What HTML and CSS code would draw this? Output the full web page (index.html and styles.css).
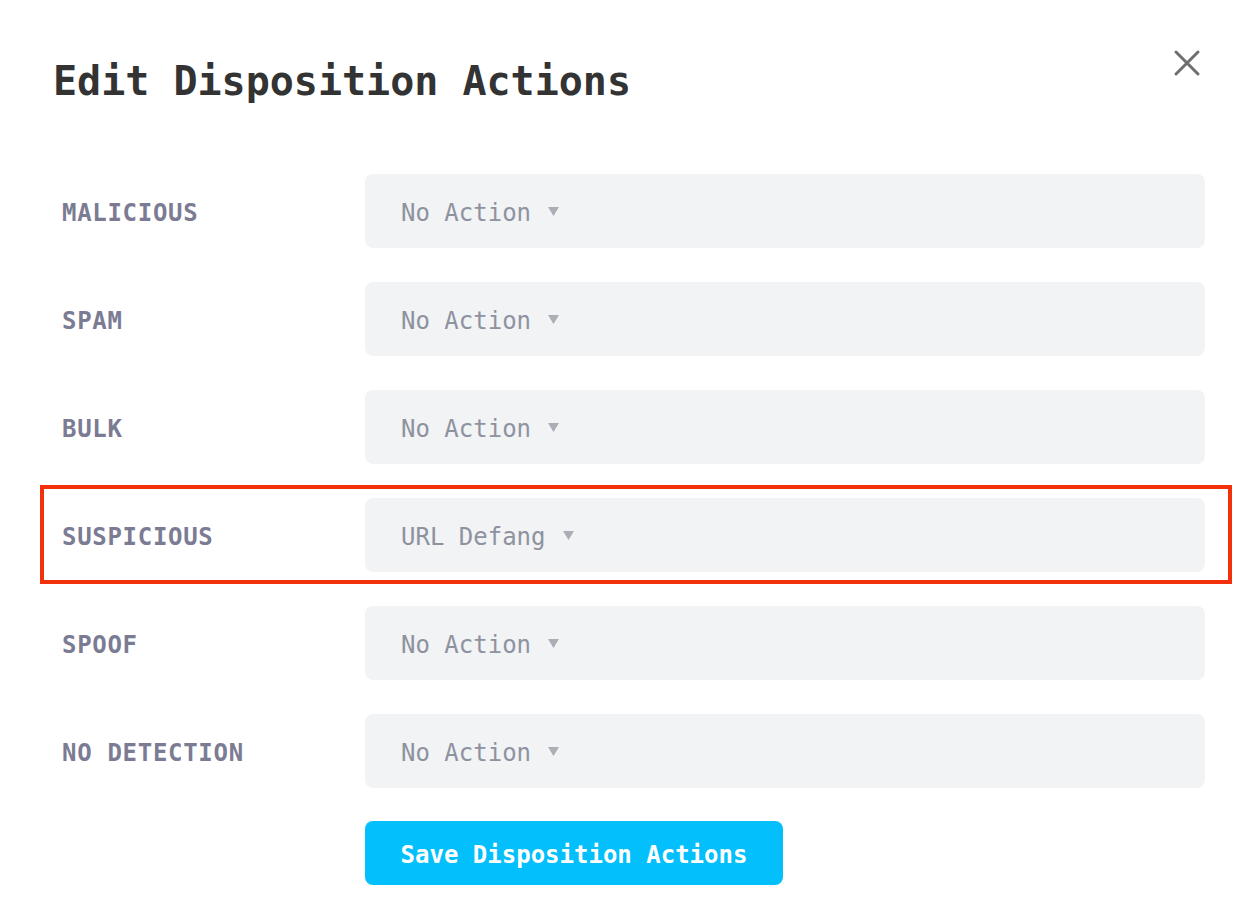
FILE: index.html
```html
<!DOCTYPE html>
<html lang="en">
<head>
<meta charset="utf-8">
<title>Edit Disposition Actions</title>
<link rel="stylesheet" href="styles.css">
</head>
<body>
<div class="modal">
  <button class="close" aria-label="Close">
    <svg width="28" height="28" viewBox="0 0 28 28"><path d="M3 3 L25 25 M25 3 L3 25" stroke="#6e6e6e" stroke-width="3" stroke-linecap="round" fill="none"/></svg>
  </button>
  <h1 class="title">Edit Disposition Actions</h1>
  <div class="rows">
    <div class="row"><div class="label">MALICIOUS</div><div class="select"><span>No Action</span><svg class="caret" width="11" height="9" viewBox="0 0 11 9"><path d="M0 0 H11 L5.5 9 Z" fill="#abaeb5"/></svg></div></div>
    <div class="row"><div class="label">SPAM</div><div class="select"><span>No Action</span><svg class="caret" width="11" height="9" viewBox="0 0 11 9"><path d="M0 0 H11 L5.5 9 Z" fill="#abaeb5"/></svg></div></div>
    <div class="row"><div class="label">BULK</div><div class="select"><span>No Action</span><svg class="caret" width="11" height="9" viewBox="0 0 11 9"><path d="M0 0 H11 L5.5 9 Z" fill="#abaeb5"/></svg></div></div>
    <div class="row highlighted"><div class="label">SUSPICIOUS</div><div class="select"><span>URL Defang</span><svg class="caret" width="11" height="9" viewBox="0 0 11 9"><path d="M0 0 H11 L5.5 9 Z" fill="#abaeb5"/></svg></div><div class="highlight"></div></div>
    <div class="row"><div class="label">SPOOF</div><div class="select"><span>No Action</span><svg class="caret" width="11" height="9" viewBox="0 0 11 9"><path d="M0 0 H11 L5.5 9 Z" fill="#abaeb5"/></svg></div></div>
    <div class="row"><div class="label">NO DETECTION</div><div class="select"><span>No Action</span><svg class="caret" width="11" height="9" viewBox="0 0 11 9"><path d="M0 0 H11 L5.5 9 Z" fill="#abaeb5"/></svg></div></div>
    <div class="row"><div class="label"></div><button class="save">Save Disposition Actions</button></div>
  </div>
</div>
</body>
</html>
```
FILE: styles.css
```css
* { box-sizing: border-box; }
html, body { margin: 0; padding: 0; background: #fff; }
body { font-family: "DejaVu Sans Mono", "Liberation Mono", monospace; }
.modal {
  position: relative;
  width: 1259px;
  min-height: 915px;
  padding: 57px 54px 0 53px;
}
.close {
  position: absolute;
  left: 1173px;
  top: 49px;
  width: 28px;
  height: 28px;
  padding: 0;
  border: 0;
  background: none;
}
.close svg { display: block; }
.title {
  margin: 0;
  font-size: 40px;
  line-height: 48px;
  font-weight: bold;
  color: #333333;
}
.rows {
  margin-top: 69px;
  padding-left: 9px;
  display: flex;
  flex-direction: column;
  gap: 34px;
}
.row {
  position: relative;
  display: flex;
  align-items: center;
}
.row:last-child { margin-top: -1px; }
.label {
  width: 303px;
  flex: none;
  padding-top: 4px;
  font-size: 24px;
  letter-spacing: 0.7px;
  font-weight: bold;
  color: #7b7c93;
}
.select {
  flex: 1;
  height: 74px;
  border-radius: 8px;
  background: #f1f3f5;
  display: flex;
  align-items: center;
  padding-left: 36px;
  padding-top: 3px;
  font-size: 24px;
  color: #8e929e;
}
.caret {
  display: block;
  margin-left: 17px;
  margin-top: -3px;
}
.highlight {
  position: absolute;
  left: -22px;
  right: -27px;
  top: -13px;
  bottom: -12px;
  border: 4px solid #f3300c;
  pointer-events: none;
}
.save {
  width: 418px;
  height: 64px;
  border: 0;
  border-radius: 8px;
  background: #03bffb;
  color: #ffffff;
  font-family: inherit;
  font-size: 24px;
  font-weight: bold;
  padding: 3px 0 0;
}
```
